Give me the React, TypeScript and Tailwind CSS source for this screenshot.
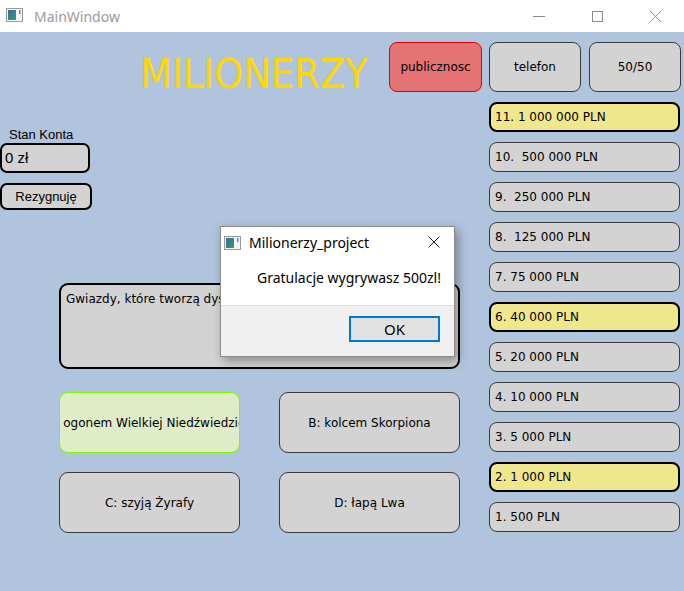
const prizes = [
  { label: "11. 1 000 000 PLN", safe: true },
  { label: "10.  500 000 PLN", safe: false },
  { label: "9.  250 000 PLN", safe: false },
  { label: "8.  125 000 PLN", safe: false },
  { label: "7. 75 000 PLN", safe: false },
  { label: "6. 40 000 PLN", safe: true },
  { label: "5. 20 000 PLN", safe: false },
  { label: "4. 10 000 PLN", safe: false },
  { label: "3. 5 000 PLN", safe: false },
  { label: "2. 1 000 PLN", safe: true },
  { label: "1. 500 PLN", safe: false },
];

const qt = "font-['DejaVu_Sans',sans-serif]";
const arial = "font-['Liberation_Sans',Arial,sans-serif]";
const segoe = "font-['Noto_Sans','Open_Sans',sans-serif]";

function AppIcon() {
  return (
    <svg width="17" height="14" viewBox="0 0 17 14">
      <defs>
        <linearGradient id="ic" x1="0" y1="0" x2="1" y2="1">
          <stop offset="0" stopColor="#2f6fa8" />
          <stop offset="1" stopColor="#3f9a6a" />
        </linearGradient>
      </defs>
      <rect x="0.5" y="0.5" width="16" height="13" fill="#f4f4f4" stroke="#9a9a9a" />
      <rect x="2" y="2" width="8" height="10" fill="url(#ic)" />
      <rect x="13" y="2" width="1.5" height="4" fill="#4a8fc0" />
    </svg>
  );
}

function AnswerButton({ text, correct }: { text: string; correct?: boolean }) {
  return (
    <div
      className={`flex h-[61px] w-[181px] items-center justify-center overflow-hidden whitespace-nowrap rounded-[9px] border text-[12px] text-black ${qt} ${
        correct ? "border-[#7cfc00] bg-[#dfecc8]" : "border-[#3a3a3a] bg-[#d3d3d3]"
      }`}
    >
      <span>{text}</span>
    </div>
  );
}

export default function App() {
  return (
    <div className="relative flex h-[591px] w-[684px] flex-col overflow-hidden bg-white">
      {/* window title bar */}
      <div className="flex h-[32px] items-center bg-white">
        <div className="ml-[6px] mt-[-2px]">
          <AppIcon />
        </div>
        <span className={`ml-[11px] text-[14px] text-[#9b9b9b] ${segoe}`}>MainWindow</span>
        <div className="ml-auto flex h-full items-center">
          <div className="flex w-[58px] justify-center">
            <div className="h-px w-[12px] bg-[#8a8a8a]" />
          </div>
          <div className="flex w-[58px] justify-center">
            <div className="h-[11px] w-[11px] border border-[#8a8a8a]" />
          </div>
          <div className="flex w-[58px] justify-center">
            <svg width="13" height="13" viewBox="0 0 13 13">
              <path d="M1 1 L12 12 M12 1 L1 12" stroke="#8a8a8a" strokeWidth="1" />
            </svg>
          </div>
        </div>
      </div>

      {/* main window body */}
      <div className="flex flex-1 bg-[#b0c4de] pt-[10px]">
        <div className="flex w-[489px] flex-col">
          <div className="flex h-[50px] items-start">
            <span
              className={`ml-[140px] mt-[12px] flex-1 text-[41px] leading-none text-[#ffd700] font-['DejaVu_Sans_Condensed','DejaVu_Sans',sans-serif]`}
            >
              MILIONERZY
            </span>
            <div
              className={`mr-[7px] flex h-[50px] w-[93px] items-center justify-center rounded-[8px] border border-[#e00000] bg-[#e57373] text-[12px] text-black ${qt}`}
            >
              publicznosc
            </div>
          </div>

          <div className={`mt-[35px] h-[15px] pl-[9px] text-[13px] leading-[15px] text-black ${arial}`}>Stan Konta</div>
          <div
            className={`mt-[1px] flex h-[30px] w-[90px] items-center rounded-[7px] border-2 border-black bg-[#d3d3d3] pl-[3px] text-[15px] text-black ${arial}`}
          >
            0 zł
          </div>
          <div
            className={`mt-[10px] flex h-[27px] w-[92px] items-center justify-center rounded-[7px] border-2 border-black bg-[#d3d3d3] text-[13px] text-black ${arial}`}
          >
            Rezygnuję
          </div>

          <div
            className={`ml-[59px] mt-[73px] h-[86px] w-[401px] overflow-hidden whitespace-nowrap rounded-[9px] border-2 border-black bg-[#d3d3d3] px-[5px] pt-[5px] text-[12px] text-black ${qt}`}
          >
            Gwiazdy, które tworzą dyszel Wielkiego Wozu, są:
          </div>

          <div className="ml-[59px] mt-[23px] grid w-[401px] grid-cols-[181px_181px] gap-x-[39px] gap-y-[19px]">
            <AnswerButton text="A: ogonem Wielkiej Niedźwiedzicy" correct />
            <AnswerButton text="B: kolcem Skorpiona" />
            <AnswerButton text="C: szyją Żyrafy" />
            <AnswerButton text="D: łapą Lwa" />
          </div>
        </div>

        <div className="flex w-[192px] flex-col gap-[10px]">
          <div className="flex gap-[8px]">
            <div
              className={`flex h-[50px] w-[92px] items-center justify-center rounded-[8px] border border-[#3a3a3a] bg-[#d3d3d3] text-[12px] text-black ${qt}`}
            >
              telefon
            </div>
            <div
              className={`flex h-[50px] w-[92px] items-center justify-center rounded-[8px] border border-[#3a3a3a] bg-[#d3d3d3] text-[12px] text-black ${qt}`}
            >
              50/50
            </div>
          </div>
          {prizes.map((p) => (
            <div
              key={p.label}
              className={`flex h-[30px] w-[191px] items-center whitespace-pre rounded-[8px] text-[12px] text-black ${qt} ${
                p.safe ? "border-2 border-black bg-[#f0e68c] pl-[4px]" : "border border-[#3a3a3a] bg-[#d3d3d3] pl-[5px]"
              }`}
            >
              {p.label}
            </div>
          ))}
        </div>
      </div>

      {/* message box */}
      <div className="absolute left-[220px] top-[226px] flex h-[131px] w-[235px] flex-col border border-[#8c8c8c] bg-white shadow-[3px_4px_10px_rgba(0,0,0,0.35)]">
        <div className="flex h-[30px] items-center pl-[3px]">
          <div className="mt-[2px]">
            <AppIcon />
          </div>
          <span className={`ml-[8px] text-[14px] text-black ${segoe}`}>Milionerzy_project</span>
          <svg className="ml-auto mr-[14px]" width="12" height="12" viewBox="0 0 12 12">
            <path d="M0.5 0.5 L11.5 11.5 M11.5 0.5 L0.5 11.5" stroke="#222" strokeWidth="1" />
          </svg>
        </div>
        <div className={`flex h-[48px] items-start justify-end pr-[13px] pt-[11px] text-[14px] leading-[20px] text-black ${segoe}`}>
          Gratulacje wygrywasz 500zl!
        </div>
        <div className="flex flex-1 items-start justify-end border-t border-[#dfdfdf] bg-[#f0f0f0] pr-[14px] pt-[10px]">
          <div
            className={`flex h-[26px] w-[91px] items-center justify-center border-2 border-[#0078d7] bg-[#e1e1e1] text-[15px] text-black ${segoe}`}
          >
            OK
          </div>
        </div>
      </div>
    </div>
  );
}
